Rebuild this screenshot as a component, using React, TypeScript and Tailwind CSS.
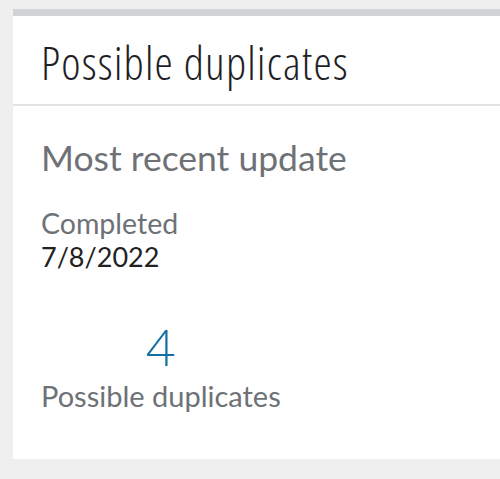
export default function App() {
  return (
    <main className="min-h-[479px] w-[500px] overflow-hidden bg-[#efefef] pl-[13px] pt-[9px] font-['Lato',sans-serif]">
      <section className="flex h-[450px] w-[520px] flex-col border-t-[7px] border-[#d2d3d6] bg-white">
        <header className="h-[90px] border-b-2 border-[#e3e3e3] px-[28px] pt-[23px]">
          <h1 className="font-['Open_Sans',sans-serif] text-[46px] font-light leading-none tracking-[1.2px] text-[#1f1f26] [font-stretch:85%]">
            Possible duplicates
          </h1>
        </header>

        <div className="flex flex-col px-[28px] pt-[34px]">
          <h2 className="text-[35.5px] leading-none text-[#6e7176]">Most recent update</h2>

          <span className="mt-[33px] text-[28.5px] leading-none text-[#6e7176]">Completed</span>
          <span className="mt-[6px] text-[27px] leading-none text-[#222222]">7/8/2022</span>

          <div className="mt-[50px] flex w-fit flex-col items-center">
            <span className="text-[52px] font-light leading-none text-[#1170a3]">4</span>
            <span className="mt-[9px] text-[29px] leading-none text-[#6e7176]">Possible duplicates</span>
          </div>
        </div>
      </section>
    </main>
  );
}
